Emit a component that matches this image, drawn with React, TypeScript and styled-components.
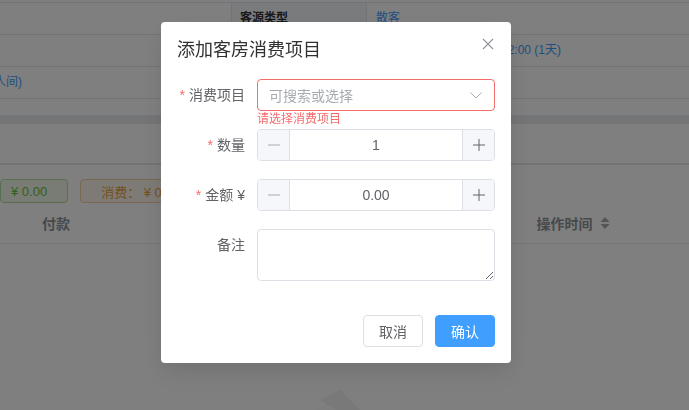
import styled, { createGlobalStyle } from "styled-components"

const GlobalStyle = createGlobalStyle`
html, body {
  margin: 0;
  padding: 0;
}
body {
  font-family: "Liberation Sans", "Noto Sans CJK SC", sans-serif;
  background: #fff;
  overflow: hidden;
}
`

const App = () => {
    return (
        <>
            <GlobalStyle />
            <Page>
                <Descriptions>
                    <DescRow>
                        <DescCell $width={231} />
                        <DescLabel>客源类型</DescLabel>
                        <DescValue>散客</DescValue>
                    </DescRow>
                    <DescRow>
                        <DescValue $clip={561}>2024-05-20 12:00 至 2024-05-21 12:00 (1天)</DescValue>
                    </DescRow>
                    <DescRow>
                        <DescValue $clip={22}>标准间 (2人间)</DescValue>
                    </DescRow>
                </Descriptions>
                <Band />
                <Panel>
                    <TabsNav />
                    <Tags>
                        <Tag $tone="success">¥ 0.00</Tag>
                        <Tag $tone="warning">消费： ¥ 0.00</Tag>
                    </Tags>
                    <TableHead>
                        <HeadCell>付款</HeadCell>
                        <HeadCell />
                        <HeadCell>
                            操作时间
                            <SortIcon width="10" height="14" viewBox="0 0 10 14">
                                <path d="M5 1 L9.5 6 H0.5 Z" fill="#a8abb2" />
                                <path d="M5 13 L9.5 8 H0.5 Z" fill="#a8abb2" />
                            </SortIcon>
                        </HeadCell>
                        <HeadCell />
                    </TableHead>
                    <EmptyBody>
                        <svg width="160" height="80" viewBox="0 0 160 80">
                            <ellipse cx="80" cy="60" rx="70" ry="18" fill="#f7f7f7" />
                            <polygon points="45,40 80,22 112,36 78,58" fill="#fcfcfc" />
                            <polygon points="70,20 90,10 110,30 96,36" fill="#f2f2f2" />
                        </svg>
                    </EmptyBody>
                </Panel>
            </Page>

            <Overlay>
                <Dialog>
                    <DialogHeader>
                        <DialogTitle>添加客房消费项目</DialogTitle>
                        <CloseIcon width="12" height="12" viewBox="0 0 12 12">
                            <path d="M1 1 L11 11 M11 1 L1 11" stroke="#909399" strokeWidth="1.1" />
                        </CloseIcon>
                    </DialogHeader>

                    <FormItem $error>
                        <Label><Star>*</Star>消费项目</Label>
                        <Field>
                            <Select $error>
                                <Placeholder>可搜索或选择</Placeholder>
                                <svg width="14" height="14" viewBox="0 0 14 14">
                                    <path d="M1.5 4.5 L7 10 L12.5 4.5" fill="none" stroke="#a8abb2" strokeWidth="1" />
                                </svg>
                            </Select>
                            <ErrorText>请选择消费项目</ErrorText>
                        </Field>
                    </FormItem>

                    <FormItem>
                        <Label><Star>*</Star>数量</Label>
                        <NumberInput>
                            <StepButton $side="left" $disabled><Minus /></StepButton>
                            <NumberValue>1</NumberValue>
                            <StepButton $side="right"><Plus /></StepButton>
                        </NumberInput>
                    </FormItem>

                    <FormItem>
                        <Label><Star>*</Star>金额 ¥</Label>
                        <NumberInput>
                            <StepButton $side="left" $disabled><Minus /></StepButton>
                            <NumberValue>0.00</NumberValue>
                            <StepButton $side="right"><Plus /></StepButton>
                        </NumberInput>
                    </FormItem>

                    <FormItem>
                        <Label>备注</Label>
                        <TextArea />
                    </FormItem>

                    <Footer>
                        <Button>取消</Button>
                        <Button $primary>确认</Button>
                    </Footer>
                </Dialog>
            </Overlay>
        </>
    )
}

const Minus = () => (
    <svg width="12" height="12" viewBox="0 0 12 12">
        <path d="M0 6 H12" stroke="currentColor" strokeWidth="1" />
    </svg>
)

const Plus = () => (
    <svg width="12" height="12" viewBox="0 0 12 12">
        <path d="M0 6 H12 M6 0 V12" stroke="currentColor" strokeWidth="1" />
    </svg>
)

/* ---------- background page ---------- */

const Page = styled.div`
width: 689px;
height: 410px;
overflow: hidden;
`

const Descriptions = styled.div`
margin-top: 2px;
border-bottom: 1px solid #e4e7ed;
margin-bottom: 16px;
`

const DescRow = styled.div`
display: flex;
height: 31px;
border-top: 1px solid #e4e7ed;
font-size: 12px;
line-height: 31px;
`

const DescCell = styled.div<{ $width: number }>`
width: ${p => p.$width}px;
flex: none;
`

const DescLabel = styled.div`
width: 136px;
flex: none;
box-sizing: border-box;
padding-left: 8px;
background: #f5f7fa;
border-left: 1px solid #e4e7ed;
border-right: 1px solid #e4e7ed;
color: #303133;
font-weight: bold;
`

const DescValue = styled.div<{ $clip?: number }>`
color: #409eff;
white-space: nowrap;
${p => p.$clip ? `
width: ${p.$clip}px;
flex: none;
display: flex;
justify-content: flex-end;
overflow: hidden;
` : `
padding-left: 9px;
`}
`

const Band = styled.div`
height: 9px;
background: #e9ebef;
`

const Panel = styled.div`
background: #fff;
`

const TabsNav = styled.div`
height: 39px;
border-bottom: 2px solid #e4e7ed;
`

const Tags = styled.div`
display: flex;
gap: 12px;
padding-top: 14px;
`

const Tag = styled.div<{ $tone: "success" | "warning" }>`
height: 24px;
box-sizing: border-box;
display: flex;
align-items: center;
font-size: 13px;
border-radius: 4px;
white-space: nowrap;
padding: ${p => p.$tone === "success" ? "0 20px 0 10px" : "0 20px"};
color: ${p => p.$tone === "success" ? "#67c23a" : "#e6a23c"};
background: ${p => p.$tone === "success" ? "#f0f9eb" : "#fdf6ec"};
border: 1px solid ${p => p.$tone === "success" ? "#b3e19d" : "#f3d19e"};
`

const TableHead = styled.div`
display: grid;
grid-template-columns: 112px 1fr 146px 43px;
height: 40px;
border-bottom: 1px solid #ebeef5;
`

const HeadCell = styled.div`
display: flex;
align-items: center;
justify-content: center;
font-size: 14px;
font-weight: bold;
color: #909399;
`

const SortIcon = styled.svg`
margin-left: 7px;
`

const EmptyBody = styled.div`
display: flex;
justify-content: center;
padding: 136px 30px 0 0;
`

/* ---------- dialog ---------- */

const Overlay = styled.div`
position: fixed;
inset: 0;
background: rgba(0, 0, 0, 0.5);
`

const Dialog = styled.div`
width: 350px;
box-sizing: border-box;
margin: 22px 0 0 161px;
padding: 16px;
background: #fff;
border-radius: 4px;
box-shadow: 0 12px 32px 4px rgba(0, 0, 0, 0.04), 0 8px 20px rgba(0, 0, 0, 0.08);
`

const DialogHeader = styled.div`
display: flex;
justify-content: space-between;
align-items: flex-start;
padding-bottom: 17px;
`

const DialogTitle = styled.div`
font-size: 18px;
line-height: 24px;
color: #303133;
`

const CloseIcon = styled.svg`
margin: 0 1px 0 0;
`

const FormItem = styled.div<{ $error?: boolean }>`
display: grid;
grid-template-columns: 80px 1fr;
margin-bottom: ${p => p.$error ? "0" : "18px"};
`

const Label = styled.div`
box-sizing: border-box;
padding-right: 12px;
text-align: right;
font-size: 14px;
line-height: 32px;
color: #606266;
`

const Star = styled.span`
color: #f56c6c;
margin-right: 4px;
`

const Field = styled.div`
display: flex;
flex-direction: column;
`

const Select = styled.div<{ $error?: boolean }>`
height: 32px;
box-sizing: border-box;
display: flex;
align-items: center;
justify-content: space-between;
padding: 0 11px 0 11px;
border: 1px solid ${p => p.$error ? "#f56c6c" : "#dcdfe6"};
border-radius: 4px;
`

const Placeholder = styled.span`
font-size: 14px;
color: #a8abb2;
`

const ErrorText = styled.div`
font-size: 12px;
line-height: 12px;
color: #f56c6c;
padding: 2px 0 4px;
`

const NumberInput = styled.div`
height: 32px;
box-sizing: border-box;
display: grid;
grid-template-columns: 32px 1fr 32px;
border: 1px solid #dcdfe6;
border-radius: 4px;
overflow: hidden;
`

const StepButton = styled.div<{ $side: "left" | "right"; $disabled?: boolean }>`
display: flex;
align-items: center;
justify-content: center;
background: #f5f7fa;
color: ${p => p.$disabled ? "#a8abb2" : "#606266"};
${p => p.$side === "left" ? "border-right: 1px solid #dcdfe6;" : "border-left: 1px solid #dcdfe6;"}
`

const NumberValue = styled.div`
display: flex;
align-items: center;
justify-content: center;
font-size: 14px;
color: #606266;
`

const TextArea = styled.textarea`
display: block;
width: 100%;
height: 52px;
box-sizing: border-box;
margin: 0;
padding: 5px 11px;
border: 1px solid #dcdfe6;
border-radius: 4px;
resize: vertical;
font-family: inherit;
font-size: 14px;
outline: none;
`

const Footer = styled.div`
display: flex;
justify-content: flex-end;
gap: 12px;
padding-top: 16px;
`

const Button = styled.button<{ $primary?: boolean }>`
height: 32px;
box-sizing: border-box;
padding: 0 15px;
font-family: inherit;
font-size: 14px;
border-radius: 4px;
border: 1px solid ${p => p.$primary ? "#409eff" : "#dcdfe6"};
background: ${p => p.$primary ? "#409eff" : "#fff"};
color: ${p => p.$primary ? "#fff" : "#606266"};
`

export default App;
